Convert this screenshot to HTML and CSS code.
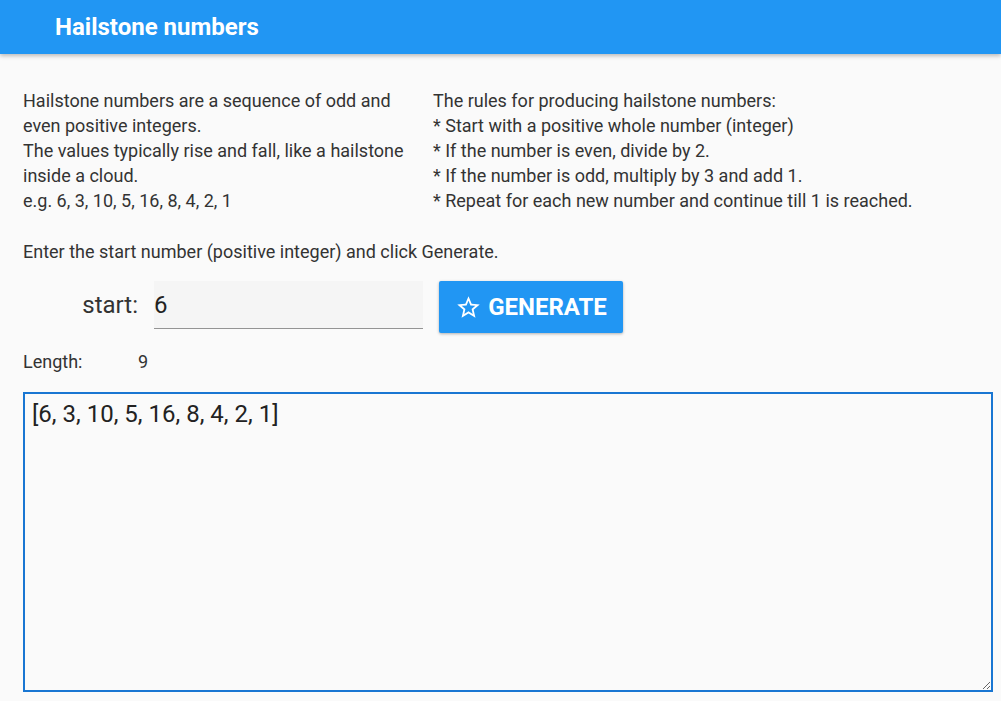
FILE: index.html
```html
<!DOCTYPE html>
<html>
<head>
<meta charset="utf-8">
<link rel="stylesheet" href="styles.css">
</head>
<body>
<header class="appbar"><h1 class="title">Hailstone numbers</h1></header>
<main class="content">
  <section class="intro">
    <div class="col col-left">
      <div>Hailstone numbers are a sequence of odd and even positive integers.</div>
      <div>The values typically rise and fall, like a hailstone inside a cloud.</div>
      <div>e.g. 6, 3, 10, 5, 16, 8, 4, 2, 1</div>
    </div>
    <div class="col col-right">
      <div>The rules for producing hailstone numbers:</div>
      <div>* Start with a positive whole number (integer)</div>
      <div>* If the number is even, divide by 2.</div>
      <div>* If the number is odd, multiply by 3 and add 1.</div>
      <div>* Repeat for each new number and continue till 1 is reached.</div>
    </div>
  </section>
  <p class="prompt">Enter the start number (positive integer) and click Generate.</p>
  <div class="form-row">
    <label class="start-label" for="start">start:</label>
    <input id="start" class="start-input" type="text" value="6">
    <button class="btn">
      <svg class="star" viewBox="0 0 24 24" width="27" height="27"><path fill="#fff" d="M22 9.24l-7.19-.62L12 2 9.19 8.63 2 9.24l5.46 4.73L5.82 21 12 17.27 18.18 21l-1.63-7.03L22 9.24zM12 15.4l-3.76 2.27 1-4.28-3.32-2.88 4.38-.38L12 6.1l1.71 4.04 4.38.38-3.32 2.88 1 4.28L12 15.4z"/></svg>
      <span>GENERATE</span>
    </button>
  </div>
  <div class="length-row"><span class="length-label">Length:</span><span class="length-val">9</span></div>
  <textarea id="output" class="output">[6, 3, 10, 5, 16, 8, 4, 2, 1]</textarea>
</main>
<script src="script.js"></script>
</body>
</html>
```
FILE: styles.css
```css
html, body {
  margin: 0;
  padding: 0;
  background: #fafafa;
  font-family: Roboto, "Noto Sans", sans-serif;
  color: #333;
}
.appbar {
  height: 54px;
  background: #2196f3;
  box-shadow: 0 2px 4px rgba(0,0,0,0.25);
  display: flex;
  align-items: center;
  padding-left: 55px;
}
.title {
  margin: 0;
  color: #fff;
  font-size: 24px;
  font-weight: 700;
}
.content {
  padding: 0 8px 0 23px;
}
.intro {
  display: flex;
  font-size: 18px;
  line-height: 25px;
  margin-top: 34px;
}
.col-left {
  width: 410px;
  padding-right: 20px;
  box-sizing: border-box;
}
.prompt {
  margin: 26px 0 0;
  font-size: 18px;
  line-height: 25px;
}
.form-row {
  display: flex;
  align-items: flex-start;
  margin-top: 17px;
}
.start-label {
  width: 131px;
  text-align: right;
  font-size: 24px;
  line-height: 48px;
  color: #333;
  padding-right: 16px;
  box-sizing: border-box;
}
.start-input {
  width: 269px;
  height: 48px;
  box-sizing: border-box;
  border: none;
  border-bottom: 1px solid #949494;
  background: #f5f5f5;
  font-family: Roboto, sans-serif;
  font-size: 24px;
  color: #222;
  padding: 0;
  outline: none;
}
.btn {
  margin-left: 16px;
  width: 184px;
  height: 52px;
  border: none;
  border-radius: 2px;
  background: #2196f3;
  color: #fff;
  font-family: Roboto, sans-serif;
  font-weight: 700;
  font-size: 24px;
  display: flex;
  align-items: center;
  justify-content: center;
  gap: 6px;
  box-shadow: 0 1px 3px rgba(0,0,0,0.3);
  padding: 0;
}
.star { display: block; }
.length-row {
  margin-top: 17px;
  font-size: 18px;
  line-height: 24px;
  display: flex;
}
.length-label { width: 115px; }
.output {
  display: block;
  margin-top: 18px;
  width: 970px;
  height: 300px;
  box-sizing: border-box;
  border: 2px solid #1976d2;
  background: #fafafa;
  font-family: Roboto, sans-serif;
  font-size: 24px;
  color: #222;
  padding: 6px 7px;
  outline: none;
  resize: both;
}
```
FILE: script.js
```js
var t = document.getElementById('output');
t.focus();
t.setSelectionRange(t.value.length, t.value.length);
```
